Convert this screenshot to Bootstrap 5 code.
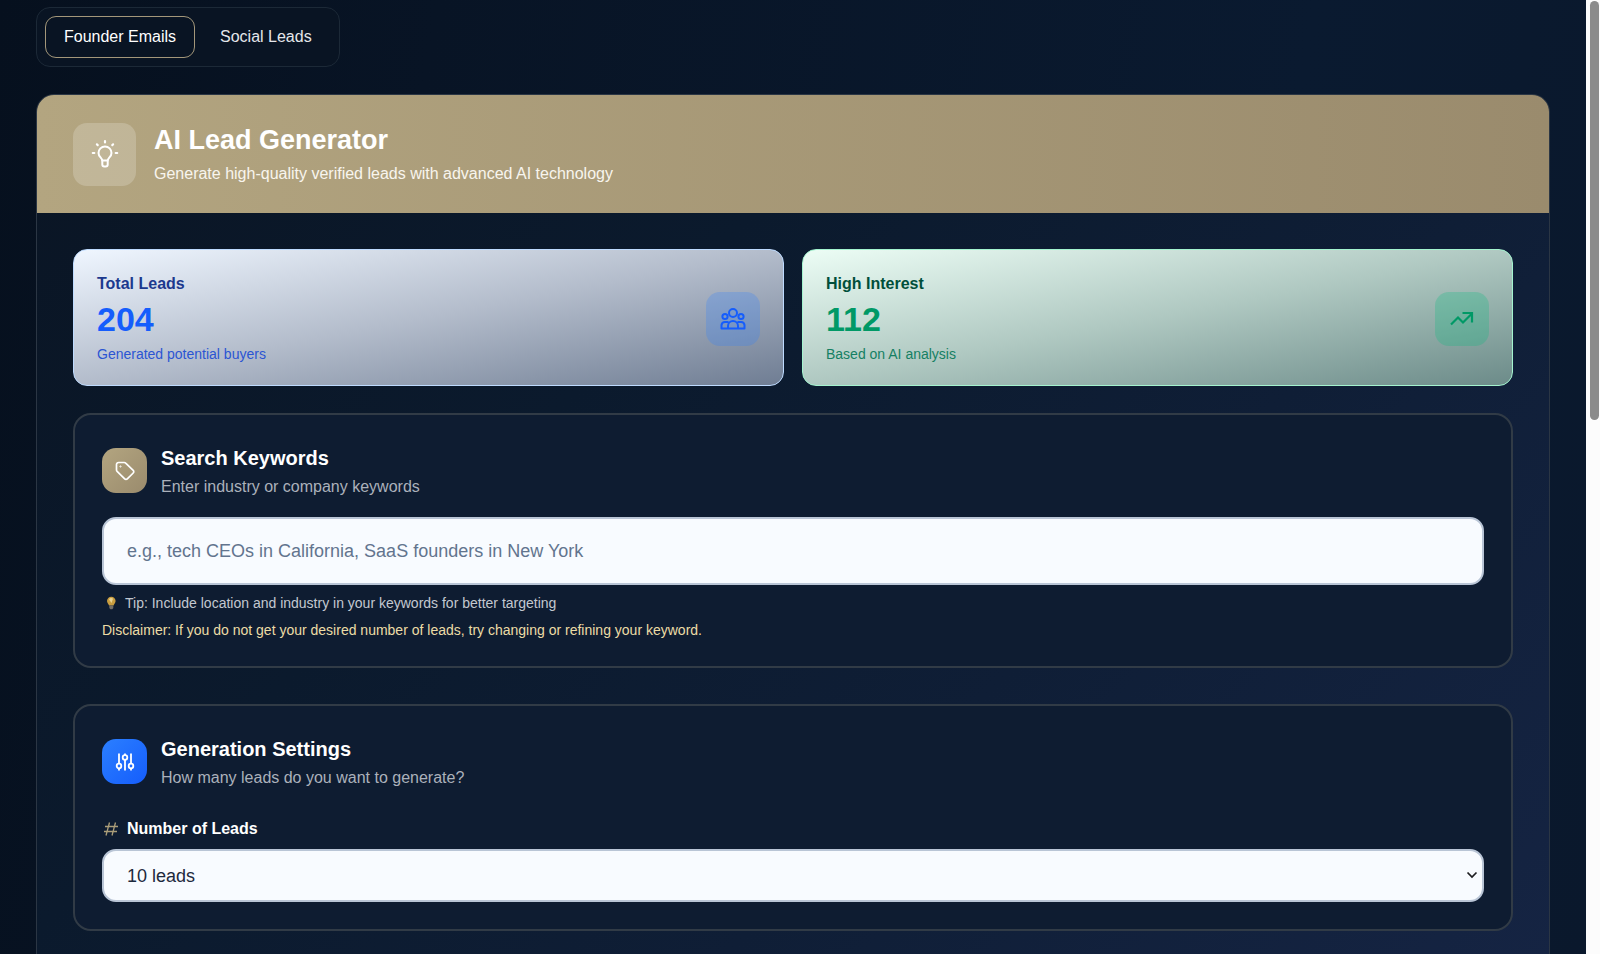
<!DOCTYPE html>
<html lang="en">
<head>
<meta charset="utf-8">
<meta name="viewport" content="width=device-width, initial-scale=1">
<title>AI Lead Generator</title>
<link href="https://cdn.jsdelivr.net/npm/bootstrap@5.3.0/dist/css/bootstrap.min.css" rel="stylesheet">
<style>
  body { font-family: "Liberation Sans", Arial, sans-serif; font-size: 16px; line-height: 24px; color: #fff; background: #08152a; }
  .app-main { padding: 7px 36px 0; background: linear-gradient(100deg, #06101e 0%, #081425 25%, #0a1a30 75%, #0a182c 100%); }
  .tab-group { padding: 8px; border: 1px solid #1c2937; border-radius: 14px; background: #091423; margin-bottom: 27px; gap: 6px; }
  .tab-btn { padding: 8px 18px; border: 1px solid transparent; border-radius: 11px; background: transparent; color: #e5e7eb; }
  .tab-btn.active { border-color: #a3977a; color: #fff; }
  .panel { border: 1px solid #2b3644; border-radius: 18px 18px 0 0; background: linear-gradient(135deg, #0a1524 0%, #0b1a2d 35%, #0f1e36 65%, #152443 100%); overflow: hidden; }
  .panel-head { padding: 27px 36px; gap: 18px; background: linear-gradient(90deg, #b3a580, #9a8b6d); }
  .tile-lg { width: 63px; height: 63px; border-radius: 14px; background: rgba(255,255,255,.2); }
  .tile-md { width: 54px; height: 54px; border-radius: 14px; }
  .tile-sm { width: 45px; height: 45px; border-radius: 14px; }
  .page-title { font-size: 27px; line-height: 36px; font-weight: 700; }
  .page-sub { line-height: 24px; color: #f8f5ee; margin-top: 4px; }
  .panel-body { padding: 36px; }
  .stats { gap: 18px; margin-bottom: 27px; }
  .stat { padding: 22px 23px 20px; border: 1px solid; border-radius: 14px; }
  .stat-blue { border-color: #bedbff; background: linear-gradient(to bottom right, #eff6ff 0%, #b3bccb 50%, #6f7d93 100%); }
  .stat-green { border-color: #a4f4cf; background: linear-gradient(to bottom right, #ecfdf5 0%, #afc8c1 50%, #6c8b89 100%); }
  .stat-label { font-weight: 700; line-height: 24px; }
  .stat-num { font-size: 34px; line-height: 47px; font-weight: 700; }
  .stat-note { font-size: 14px; line-height: 22px; }
  .blue-dark { color: #1c398e; } .blue-mid { color: #155dfc; } .blue-note { color: #2b55d3; }
  .green-dark { color: #004f3b; } .green-mid { color: #009966; } .green-note { color: #158063; }
  .tile-blue { background: rgba(43,127,255,.25); }
  .tile-green { background: rgba(0,188,125,.25); }
  .tile-gold { background: linear-gradient(135deg, #b3a580, #9a8b6d); }
  .tile-vivid { background: linear-gradient(135deg, #2b7fff, #155dfc); }
  .box { padding: 27px; border: 2px solid #313b46; border-radius: 18px; background: #0e1c31; }
  .box + .box { margin-top: 36px; }
  .box-head { gap: 14px; margin-bottom: 18px; }
  .box-title { font-size: 20px; line-height: 32px; font-weight: 700; }
  .box-sub { line-height: 24px; color: #abb1bb; margin-top: 1px; }
  .field { width: 100%; border: 2px solid #b9c5d6; border-radius: 14px; background: #f8fbff; font-size: 18px; color: #1d293d; padding: 0 23px; }
  .field::placeholder { color: #62748e; opacity: 1; }
  .field-text { height: 68px; }
  .field-select { height: 53px; appearance: none; }
  .chev { right: 6px; top: 20px; pointer-events: none; }
  .hint { font-size: 14px; line-height: 18px; color: #c3c8d0; gap: 5px; margin-top: 9px; }
  .warn { font-size: 14px; line-height: 18px; color: #ecdca6; margin-top: 9px; }
  .field-label { font-weight: 700; line-height: 24px; gap: 7px; margin: 27px 0 8px; }
  .scroll-rail { width: 14px; background: #fcfcfc; padding: 1px 1px 0 4px; }
  .scroll-thumb { height: 44%; border-radius: 5px; background: #8b8b8b; }
</style>
</head>
<body>
<div class="d-flex vh-100 overflow-hidden">
  <main class="app-main flex-grow-1 overflow-hidden">
    <nav class="tab-group d-inline-flex" aria-label="Lead sources">
      <button type="button" class="tab-btn active">Founder Emails</button>
      <button type="button" class="tab-btn">Social Leads</button>
    </nav>

    <div class="panel">
      <header class="panel-head d-flex align-items-center">
        <div class="tile-lg d-flex align-items-center justify-content-center flex-shrink-0">
          <svg width="28" height="32" viewBox="0 0 28 32" fill="none" stroke="#fff" stroke-width="2" stroke-linecap="round">
            <path d="M11.300 22.500c0-2.500-3.800-3.500-3.800-7.500a6.500 6.500 0 0 1 13 0c0 4-3.800 5-3.800 7.500"/>
            <path d="M11.300 22.500h5.400v4a2 2 0 0 1-2 2h-1.400a2 2 0 0 1-2-2z" stroke-width="2"/>
            <path d="M14 3v1.500M5.900 6.300l.8.800M22.100 6.300l-.8.800M1.800 15h1.500M24.700 15h1.500" stroke-width="2.200"/>
          </svg>
        </div>
        <div>
          <h1 class="page-title mb-0">AI Lead Generator</h1>
          <p class="page-sub mb-0">Generate high-quality verified leads with advanced AI technology</p>
        </div>
      </header>

      <div class="panel-body">
        <div class="stats d-flex">
          <div class="stat stat-blue flex-fill w-50 d-flex align-items-center justify-content-between">
            <div>
              <div class="stat-label blue-dark">Total Leads</div>
              <div class="stat-num blue-mid">204</div>
              <div class="stat-note blue-note">Generated potential buyers</div>
            </div>
            <div class="tile-md tile-blue d-flex align-items-center justify-content-center">
              <svg width="28" height="28" viewBox="0 0 28 28" fill="none" stroke="#155dfc" stroke-width="2" stroke-linejoin="round">
                <circle cx="14" cy="8" r="4"/><circle cx="6" cy="11.500" r="2.600"/><circle cx="22" cy="11.500" r="2.600"/>
                <path d="M9 23.500V21a5 5 0 0 1 10 0v2.500zM9 23.500H2.500V20A3.500 3.500 0 0 1 6 17h3.500M19 23.500h6.500V20a3.500 3.500 0 0 0-3.500-3h-3.500"/>
              </svg>
            </div>
          </div>
          <div class="stat stat-green flex-fill w-50 d-flex align-items-center justify-content-between">
            <div>
              <div class="stat-label green-dark">High Interest</div>
              <div class="stat-num green-mid">112</div>
              <div class="stat-note green-note">Based on AI analysis</div>
            </div>
            <div class="tile-md tile-green d-flex align-items-center justify-content-center">
              <svg width="26" height="26" viewBox="0 0 26 26" fill="none" stroke="#009966" stroke-width="2.200">
                <path d="M2 18.500l7-7 5 5 9-9M13.500 7H23v9.500"/>
              </svg>
            </div>
          </div>
        </div>

        <section class="box">
          <div class="box-head d-flex align-items-center">
            <div class="tile-sm tile-gold d-flex align-items-center justify-content-center flex-shrink-0">
              <svg width="22" height="22" viewBox="0 0 22 22" fill="none" stroke="#fff" stroke-width="1.700" stroke-linejoin="round">
                <path d="M2.500 4.500a2 2 0 0 1 2-2h5.800a2 2 0 0 1 1.400.600l7.500 7.300a1.800 1.800 0 0 1 0 2.600l-5.900 5.900a1.800 1.800 0 0 1-2.600 0l-7.600-7.500a2 2 0 0 1-.600-1.400z"/>
                <circle cx="6.500" cy="6.500" r=".6" stroke-width="1"/>
              </svg>
            </div>
            <div>
              <h2 class="box-title mb-0">Search Keywords</h2>
              <p class="box-sub mb-0">Enter industry or company keywords</p>
            </div>
          </div>
          <input type="text" class="field field-text d-block" aria-label="Search keywords" placeholder="e.g., tech CEOs in California, SaaS founders in New York">
          <p class="hint d-flex align-items-center mb-0">
            <svg width="18" height="14" viewBox="0 0 18 14">
              <path d="M5 5a4.300 4.300 0 0 1 8.600 0c0 2-1.700 3-2 4.500H7C6.700 8 5 7 5 5z" fill="#c99d3f"/>
              <path d="M7 3.500a2.500 2.500 0 0 1 4-.8L9.500 7z" fill="#ead493"/>
              <path d="M7.300 9.500h4v2.500l-1 1.200h-2l-1-1.200z" fill="#736e66"/>
            </svg>
            <span>Tip: Include location and industry in your keywords for better targeting</span>
          </p>
          <p class="warn mb-0">Disclaimer: If you do not get your desired number of leads, try changing or refining your keyword.</p>
        </section>

        <section class="box">
          <div class="box-head d-flex align-items-center">
            <div class="tile-sm tile-vivid d-flex align-items-center justify-content-center flex-shrink-0">
              <svg width="20" height="20" viewBox="0 0 20 20" fill="none" stroke="#fff" stroke-width="1.800">
                <path d="M4 1.500v10M4 16.500v2M10 1.500v1.500M10 8v10.500M16 1.500v10M16 16.500v2"/>
                <circle cx="4" cy="14" r="2.300"/><circle cx="10" cy="5.500" r="2.300"/><circle cx="16" cy="14" r="2.300"/>
              </svg>
            </div>
            <div>
              <h2 class="box-title mb-0">Generation Settings</h2>
              <p class="box-sub mb-0">How many leads do you want to generate?</p>
            </div>
          </div>
          <label for="leadCount" class="field-label d-flex align-items-center">
            <svg width="18" height="18" viewBox="0 0 18 18" fill="none" stroke="#aa9d79" stroke-width="1.300">
              <path d="M7.500 2.500l-3.500 13M13.500 2.500l-3.500 13M3 6.500h13M2 11.500h13"/>
            </svg>
            <span>Number of Leads</span>
          </label>
          <div class="position-relative">
            <select id="leadCount" class="field field-select d-block">
              <option>10 leads</option><option>25 leads</option><option>50 leads</option>
            </select>
            <svg class="chev position-absolute" width="12" height="12" viewBox="0 0 12 12" fill="none" stroke="#1d1d20" stroke-width="1.700"><path d="M1.500 3.500L6 8l4.500-4.500"/></svg>
          </div>
        </section>
      </div>
    </div>
  </main>
  <div class="scroll-rail flex-shrink-0" aria-hidden="true"><div class="scroll-thumb"></div></div>
</div>
</body>
</html>
